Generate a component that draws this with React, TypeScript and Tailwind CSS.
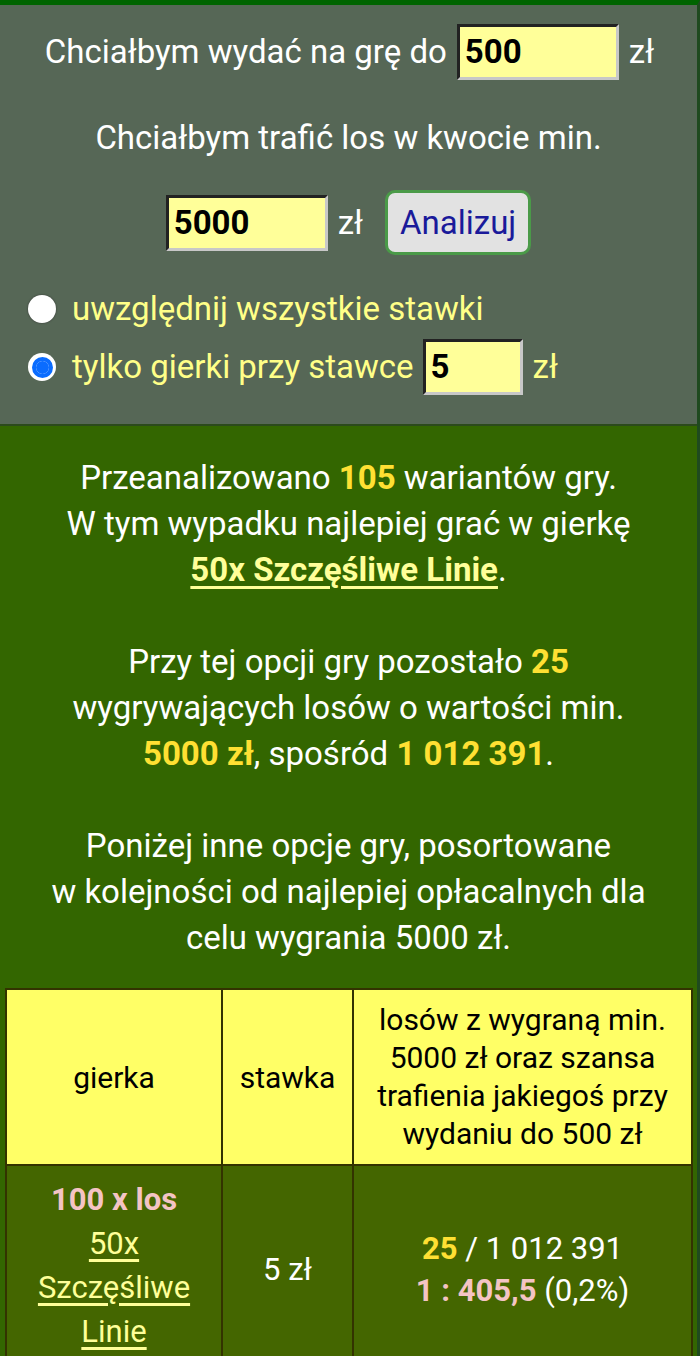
import React from "react";

const font = { fontFamily: "Roboto, 'Noto Sans', sans-serif" };

const Field = ({ value, w }: { value: string; w: string }) => (
  <span
    className={`inline-flex items-center h-[56px] ${w} bg-[#ffff99] border-[3px] border-t-[#222] border-l-[#222] border-b-[#c8c8c8] border-r-[#c8c8c8] pl-[5px] text-[33px] font-bold text-black`}
  >
    {value}
  </span>
);

const Radio = ({ on }: { on?: boolean }) =>
  on ? (
    <span className="w-[28px] h-[28px] rounded-full bg-white flex items-center justify-center shrink-0">
      <span className="w-[21px] h-[21px] rounded-full border-[4px] border-[#0a6cff] bg-white flex items-center justify-center">
        <span className="w-[13px] h-[13px] rounded-full bg-[#0a6cff]" />
      </span>
    </span>
  ) : (
    <span className="w-[28px] h-[28px] rounded-full bg-white shadow-[0_0_2px_#333] shrink-0" />
  );

export default function App() {
  return (
    <div style={font} className="w-[700px] min-h-[1356px] bg-[#336600] border-t-[5px] border-t-[#006400] border-r-[3px] border-r-[#1f4a1f] overflow-hidden">
      <div className="bg-[#566756] border-b-[2px] border-b-[#2c4a1c] text-white text-[33px] leading-[46px] pt-[19px] pb-[29px]">
        <div className="flex items-center justify-center h-[56px] ml-[2px]">
          <span>Chciałbym wydać na grę do</span>
          <span className="ml-[10px]">
            <Field value="500" w="w-[162px]" />
          </span>
          <span className="ml-[10px]">zł</span>
        </div>
        <div className="text-center mt-[35px]">Chciałbym trafić los w kwocie min.</div>
        <div className="flex items-center justify-center h-[65px] mt-[29px]">
          <Field value="5000" w="w-[162px]" />
          <span className="ml-[10px]">zł</span>
          <button className="ml-[22px] h-[65px] px-[12px] rounded-[10px] bg-[#e2e2e2] border-[3px] border-[#4a9a48] text-[#1a1a9a] text-[33px]">
            Analizuj
          </button>
        </div>
        <div className="mt-[32px] pl-[28px] flex flex-col gap-[8px] text-[#ffff88]">
          <div className="flex items-center gap-[16px] h-[44px]">
            <Radio />
            <span>uwzględnij wszystkie stawki</span>
          </div>
          <div className="flex items-center gap-[16px] h-[56px]">
            <Radio on />
            <span className="flex items-center">
              <span>tylko gierki przy stawce</span>
              <span className="ml-[9px]">
                <Field value="5" w="w-[100px]" />
              </span>
              <span className="ml-[10px]">zł</span>
            </span>
          </div>
        </div>
      </div>

      <div className="text-white text-[33px] leading-[46px] text-center pt-[29px] pb-[27px]">
        <p>
          Przeanalizowano <b className="text-[#ffe033] font-bold">105</b> wariantów gry.
          <br />W tym wypadku najlepiej grać w gierkę
          <br />
          <a className="text-[#ffff99] font-bold underline underline-offset-[5px]">50x Szczęśliwe Linie</a>.
        </p>
        <p className="mt-[46px]">
          Przy tej opcji gry pozostało <b className="text-[#ffe033]">25</b>
          <br />
          wygrywających losów o wartości min.
          <br />
          <b className="text-[#ffe033]">5000 zł</b>, spośród <b className="text-[#ffe033]">1 012 391</b>.
        </p>
        <p className="mt-[46px]">
          Poniżej inne opcje gry, posortowane
          <br />w kolejności od najlepiej opłacalnych dla
          <br />
          celu wygrania 5000 zł.
        </p>
      </div>

      <table className="ml-[5px] w-[688px] border-collapse text-[30px]">
        <thead>
          <tr className="bg-[#ffff66] text-black h-[176px]">
            <th className="w-[216px] border-2 border-[#333300] font-normal">gierka</th>
            <th className="w-[131px] border-2 border-[#333300] font-normal">stawka</th>
            <th className="border-2 border-[#333300] font-normal leading-[38px] px-[6px]">
              losów z wygraną min. 5000 zł oraz szansa trafienia jakiegoś przy wydaniu do 500 zł
            </th>
          </tr>
        </thead>
        <tbody>
          <tr className="bg-[#446600] text-white text-[31px] leading-[44px]">
            <td className="border-2 border-[#333300] text-center pt-[12px] pb-[20px]">
              <div className="text-[#f4c4c4] font-bold">100 x los</div>
              <a className="text-[#ffff99] underline underline-offset-[5px]">
                50x
                <br />
                Szczęśliwe
                <br />
                Linie
              </a>
            </td>
            <td className="border-2 border-[#333300] text-center">5 zł</td>
            <td className="border-2 border-[#333300] text-center leading-[42px]">
              <b className="text-[#ffe033]">25</b> / 1 012 391
              <br />
              <b className="text-[#f4c4c4]">1 : 405,5</b> (0,2%)
            </td>
          </tr>
        </tbody>
      </table>
    </div>
  );
}
